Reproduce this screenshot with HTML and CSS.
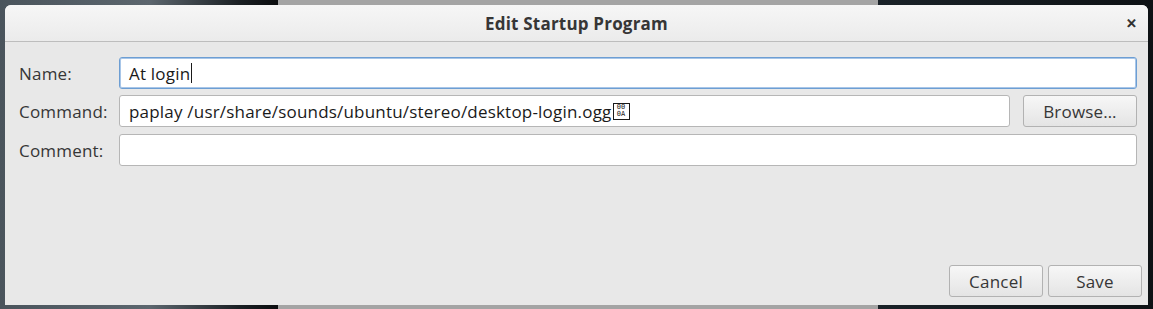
FILE: index.html
```html
<!DOCTYPE html>
<html lang="en">
<head>
  <meta charset="UTF-8">
  <title>Edit Startup Program</title>
  <link rel="stylesheet" href="styles.css">
</head>
<body>
  <div class="dialog">
    <div class="title-bar">
      <span class="title">Edit Startup Program</span>
      <span class="close">&#x2715;</span>
    </div>

    <div class="form">
      <div class="row">
        <label class="label">Name:</label>
        <div class="field focused">At login<span class="caret"></span></div>
      </div>
      <div class="row">
        <label class="label">Command:</label>
        <div class="field">paplay /usr/share/sounds/ubuntu/stereo/desktop-login.ogg<span class="hexbox"><span>00</span><span>0A</span></span></div>
        <button class="btn browse">Browse…</button>
      </div>
      <div class="row">
        <label class="label">Comment:</label>
        <div class="field"></div>
      </div>
    </div>

    <div class="actions">
      <button class="btn">Cancel</button>
      <button class="btn">Save</button>
    </div>
  </div>
</body>
</html>
```

FILE: styles.css
```css
* {
  box-sizing: border-box;
  margin: 0;
  padding: 0;
}

html, body {
  width: 1153px;
  height: 309px;
  overflow: hidden;
}

body {
  font-family: 'Open Sans', 'DejaVu Sans', sans-serif;
  font-size: 17px;
  letter-spacing: 0.2px;
  color: #363636;
  padding: 5px 5px 0 5px;
  background:
    linear-gradient(to right,
      #4a545c 0, #5c666e 150px, #1a1f23 240px, #0b0d0f 278px,
      #a4a4a4 278px, #a4a4a4 878px,
      #1a2228 878px, #0e1215 1153px);
}

.dialog {
  width: 1143px;
  height: 300px;
  background: #e8e8e8;
  border-radius: 6px 6px 0 0;
  display: flex;
  flex-direction: column;
}

.title-bar {
  height: 37px;
  border-radius: 6px 6px 0 0;
  background: linear-gradient(#f6f6f6, #ebebeb);
  border-bottom: 1px solid #bdbdbd;
  display: flex;
  align-items: center;
  justify-content: center;
  position: relative;
}

.title {
  font-weight: bold;
  color: #363636;
}

.close {
  position: absolute;
  right: 11px;
  top: 9px;
  font-size: 13px;
  font-weight: bold;
  color: #2a2a2a;
  -webkit-text-stroke: 0.6px #2a2a2a;
}

.form {
  padding: 15px 11px 0 14px;
  display: flex;
  flex-direction: column;
  gap: 6px;
}

.row {
  display: flex;
  align-items: center;
  height: 32px;
}

.row + .row + .row {
  margin-top: 1px;
}

.label {
  width: 100px;
  color: #363636;
}

.field {
  flex: 1;
  height: 32px;
  background: #fff;
  border: 1px solid #b6b6b6;
  border-radius: 3px;
  padding: 0 9px;
  display: flex;
  align-items: center;
  color: #1a1a1a;
  white-space: nowrap;
}

.field.focused {
  border-color: #6d9ed3;
  box-shadow: inset 0 0 0 1px #a8c6e8;
}

.caret {
  width: 1px;
  height: 20px;
  background: #1a1a1a;
  margin-left: 1px;
}

.hexbox {
  display: inline-flex;
  flex-direction: column;
  justify-content: center;
  align-items: center;
  border: 1px solid #1a1a1a;
  width: 17px;
  height: 17px;
  font-family: 'DejaVu Sans Mono', monospace;
  font-size: 7px;
  letter-spacing: 0;
  line-height: 7px;
  margin-left: 1px;
}

.btn {
  font-family: inherit;
  font-size: 17px;
  letter-spacing: 0.2px;
  color: #363636;
  height: 32px;
  border: 1px solid #b2b2b2;
  border-radius: 3px;
  background: linear-gradient(#f7f7f7, #e4e4e4);
  width: 94px;
}

.browse {
  width: 114px;
  margin-left: 13px;
}

.actions {
  margin-top: auto;
  display: flex;
  justify-content: flex-end;
  gap: 5px;
  padding: 0 6px 8px 0;
}
```
